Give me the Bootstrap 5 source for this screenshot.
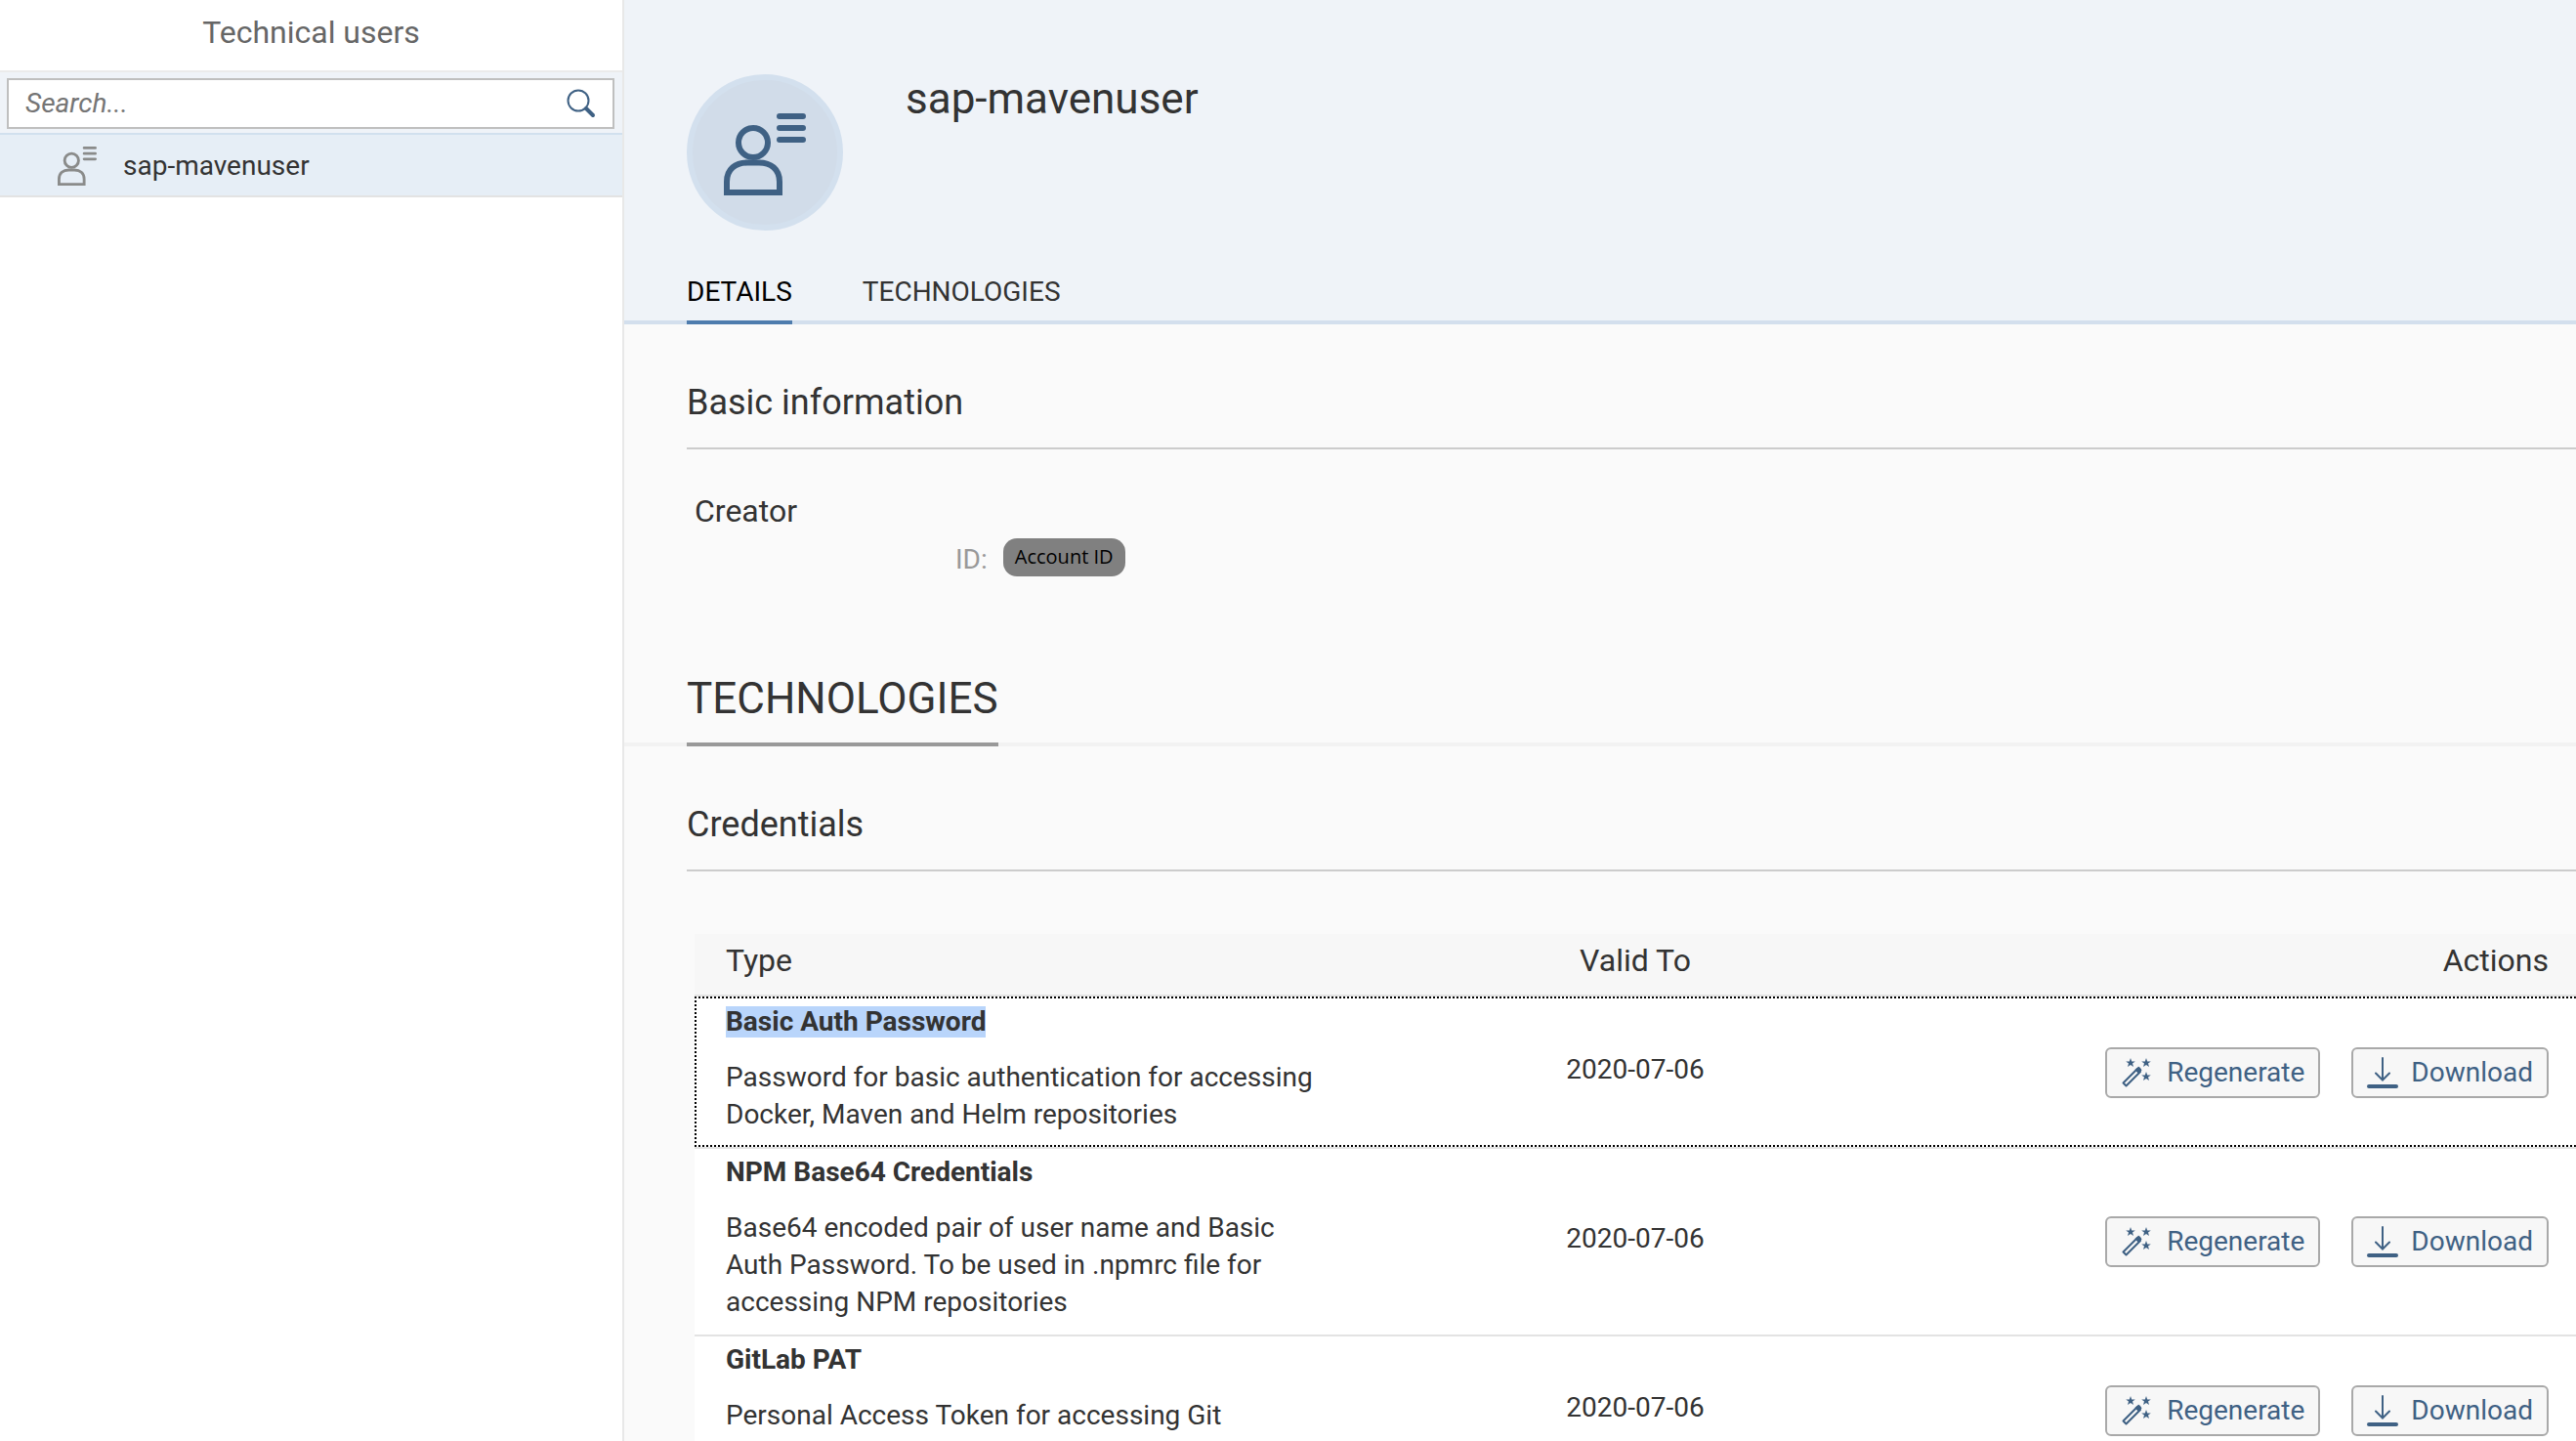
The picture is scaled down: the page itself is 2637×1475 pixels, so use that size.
<!DOCTYPE html>
<html lang="en">
<head>
<meta charset="utf-8">
<meta name="viewport" content="width=device-width, initial-scale=1">
<title>Technical users</title>
<link href="https://cdn.jsdelivr.net/npm/bootstrap@5.3.0/dist/css/bootstrap.min.css" rel="stylesheet">
<style>
body{font-family:Roboto,"Liberation Sans",sans-serif;font-size:28px;line-height:38px;color:#333;background:#fafafa}
.app-shell{height:100vh;overflow:hidden}
.side-pane{width:639px;border-right:2px solid #e8e8e8;background:#fff}
.side-title{font-size:32px;line-height:40px;padding:13px 0 19px;color:#666;border-bottom:2px solid #ebebeb;margin:0;font-weight:400}
.search-zone{background:#eff3f8;padding:6px 8px 4px 7px}
.search-box{background:#fff;border:2px solid #bfbfbf;height:52px;padding:0 17px}
.search-box input{font-size:28px;font-style:italic;line-height:38px;background:none;color:#333}
.search-box input::placeholder{color:#757575;opacity:1}
.search-box button{line-height:0;color:#3f6184}
.user-link{background:#e6eef6;border-top:2px solid #d1e0ee;border-bottom:2px solid #e3e3e3;padding:12px 59px 10px;gap:27px;color:#333}
.user-link svg{color:#8a8b8a}
.page-head{background:#eff3f8;border-bottom:4px solid #d3dfed;padding:76px 64px 0}
.avatar-disc{width:160px;height:160px;border:6px solid #d3e0ee;background:#d1dce9;color:#3f6184;padding-top:4px}
.page-title{font-size:44px;line-height:50px;font-weight:400}
.tab-strip{gap:72px;padding-top:45px}
.tab-strip a{color:#333;text-decoration:none;padding-bottom:11px;line-height:36px;border-bottom:4px solid transparent;margin-bottom:-4px}
.tab-strip .active{color:#000;border-color:#4e7cad}
.block{padding-left:64px}
.block-title{font-size:36px;line-height:48px;font-weight:400;border-bottom:2px solid #ccc;padding-bottom:22px;margin:0}
.sub-title{font-size:32px;line-height:40px;font-weight:400;margin:0;padding-top:43px}
.id-row{gap:16px;padding-left:267px;color:#999;line-height:44px}
.id-tag{background:#808080;color:#000;font:20px/24px "Open Sans","Noto Sans",sans-serif;padding:7px 12px 8px;border-radius:14px}
.part-title{border-bottom:4px solid #f2f2f2;padding:94px 0 0 64px}
.part-title h2{font-size:44px;line-height:52px;font-weight:400;padding-bottom:19px;margin:0 0 -4px;border-bottom:4px solid #999}
.cred-table{border-collapse:separate;border-spacing:0;table-layout:fixed;background:#fff;width:100%}
.cred-table th,.cred-table td{padding:0}
.cred-table thead th{font-size:32px;line-height:40px;font-weight:400;background:#f7f7f7;padding:7px 0 15px;border-bottom:2px solid #e3e3e3}
.cred-table td{border-top:2px solid #e3e3e3;vertical-align:middle}
.cred-table tbody td:first-child{padding:8px 0 14px}
.cred-table tbody td:nth-child(2){padding-bottom:7px}
.cred-table th:first-child,.cred-table tbody td:first-child{padding-left:32px}
.cred-table th:last-child,.cred-table td:last-child{padding-right:28px}
.cred-table .focused{background:
 repeating-linear-gradient(90deg,#000 0 2px,#fff 2px 4px) top/100% 2px no-repeat,
 repeating-linear-gradient(90deg,#000 0 2px,#fff 2px 4px) bottom/100% 2px no-repeat,
 repeating-linear-gradient(#000 0 2px,#fff 2px 4px) left/2px 100% no-repeat}
.cred-table .focused td{border-top-color:transparent}
.cred-name{line-height:32px;font-weight:700}
.cred-name span{display:inline-block}
.picked{background:#b9d5fb}
.cred-text{width:620px;margin:22px 0 0}
.tool-btn{border:2px solid #a9a9a9;border-radius:6px;background:#f7f7f7;color:#3f6184;height:52px;padding:0 14px;gap:13px}
</style>
</head>
<body>
<svg class="d-none" xmlns="http://www.w3.org/2000/svg">
<symbol id="person" viewBox="0 0 84 84"><g fill="none" stroke="currentColor" stroke-width="6"><circle cx="30" cy="30" r="15"/><path d="M3 81V70C3 57 12 50.500 24 50.500H36C48 50.500 57 57 57 70V81Z"/><path stroke-linecap="round" d="M57 3H81M57 15H81M57 27H81"/></g></symbol>
<symbol id="wand" viewBox="-1 -1 34 32"><path fill="none" stroke="currentColor" stroke-width="2" stroke-linejoin="round" d="M1.500 25.500L16 11L19 14L4.500 28.500Z"/><path fill="currentColor" d="M13.500 12L17 8.800Q18.500 8.800 20.500 12.500L17 16Z"/><g fill="currentColor"><path id="star" d="M9 0L10.200 3.400H13.800L11 5.600L12 9L9 7L6 9L7 5.600L4.200 3.400H7.800Z"/><use href="#star" x="16"/><use href="#star" x="16" y="14"/></g></symbol>
<symbol id="down" viewBox="0 0 32 32"><g fill="none" stroke="currentColor" stroke-linecap="round"><path stroke-width="2" d="M16 1V23M9 16.500L16 23.500L23 16.500"/><path stroke-width="4" d="M2 30H30"/></g></symbol>
</svg>
<div class="app-shell d-flex">
<aside class="side-pane flex-shrink-0">
<h1 class="side-title text-center">Technical users</h1>
<form class="search-zone"><div class="search-box d-flex align-items-center">
<input class="border-0 p-0 flex-grow-1" type="search" aria-label="Search" placeholder="Search...">
<button type="button" class="border-0 bg-transparent p-0" aria-label="Search"><svg width="30" height="30" viewBox="0 0 30 30" fill="none" stroke="currentColor"><circle cx="12" cy="12" r="10.500" stroke-width="2"/><path d="M20 20L27 27" stroke-width="4" stroke-linecap="round"/></svg></button>
</div></form>
<a href="#" class="user-link d-flex align-items-center text-decoration-none"><svg width="40" height="40"><use href="#person"/></svg><span>sap-mavenuser</span></a>
</aside>
<main class="flex-grow-1">
<header class="page-head">
<div class="d-flex gap-5 align-items-start">
<div class="avatar-disc rounded-circle d-flex align-items-center justify-content-center me-3"><svg width="84" height="84"><use href="#person"/></svg></div>
<h2 class="page-title m-0">sap-mavenuser</h2>
</div>
<nav class="tab-strip d-flex"><a href="#details" class="active">DETAILS</a><a href="#technologies">TECHNOLOGIES</a></nav>
</header>
<section class="block pt-5" id="details">
<div class="pt-2"><h3 class="block-title">Basic information</h3></div>
<div class="ps-2"><h4 class="sub-title">Creator</h4>
<div class="id-row d-flex align-items-start pt-2"><span>ID:</span><span class="id-tag">Account ID</span></div></div>
</section>
<div class="part-title d-flex" id="technologies"><h2>TECHNOLOGIES</h2></div>
<section class="block pt-5">
<div class="pt-2"><h3 class="block-title">Credentials</h3></div>
<div class="ps-2 pt-5"><div class="pt-3">
<table class="cred-table">
<colgroup><col style="width:38%"><col style="width:24%"><col style="width:38%"></colgroup>
<thead><tr><th scope="col">Type</th><th scope="col" class="text-center">Valid To</th><th scope="col" class="text-end">Actions</th></tr></thead>
<tbody>
<tr class="focused"><td><div class="cred-name"><span class="picked">Basic Auth Password</span></div><p class="cred-text">Password for basic authentication for accessing Docker, Maven and Helm repositories</p></td><td class="text-center">2020-07-06</td>
<td><div class="d-flex justify-content-end gap-4"><button type="button" class="tool-btn d-flex align-items-center me-2"><svg width="34" height="32"><use href="#wand"/></svg>Regenerate</button><button type="button" class="tool-btn d-flex align-items-center"><svg width="32" height="32"><use href="#down"/></svg>Download</button></div></td></tr>
<tr><td><div class="cred-name"><span>NPM Base64 Credentials</span></div><p class="cred-text">Base64 encoded pair of user name and Basic Auth Password. To be used in .npmrc file for accessing NPM repositories</p></td><td class="text-center">2020-07-06</td>
<td><div class="d-flex justify-content-end gap-4"><button type="button" class="tool-btn d-flex align-items-center me-2"><svg width="34" height="32"><use href="#wand"/></svg>Regenerate</button><button type="button" class="tool-btn d-flex align-items-center"><svg width="32" height="32"><use href="#down"/></svg>Download</button></div></td></tr>
<tr><td><div class="cred-name"><span>GitLab PAT</span></div><p class="cred-text">Personal Access Token for accessing Git<br>repositories</p></td><td class="text-center">2020-07-06</td>
<td><div class="d-flex justify-content-end gap-4"><button type="button" class="tool-btn d-flex align-items-center me-2"><svg width="34" height="32"><use href="#wand"/></svg>Regenerate</button><button type="button" class="tool-btn d-flex align-items-center"><svg width="32" height="32"><use href="#down"/></svg>Download</button></div></td></tr>
</tbody></table>
</div></div>
</section>
</main>
</div>
<script src="https://cdn.jsdelivr.net/npm/bootstrap@5.3.0/dist/js/bootstrap.bundle.min.js"></script>
</body>
</html>
